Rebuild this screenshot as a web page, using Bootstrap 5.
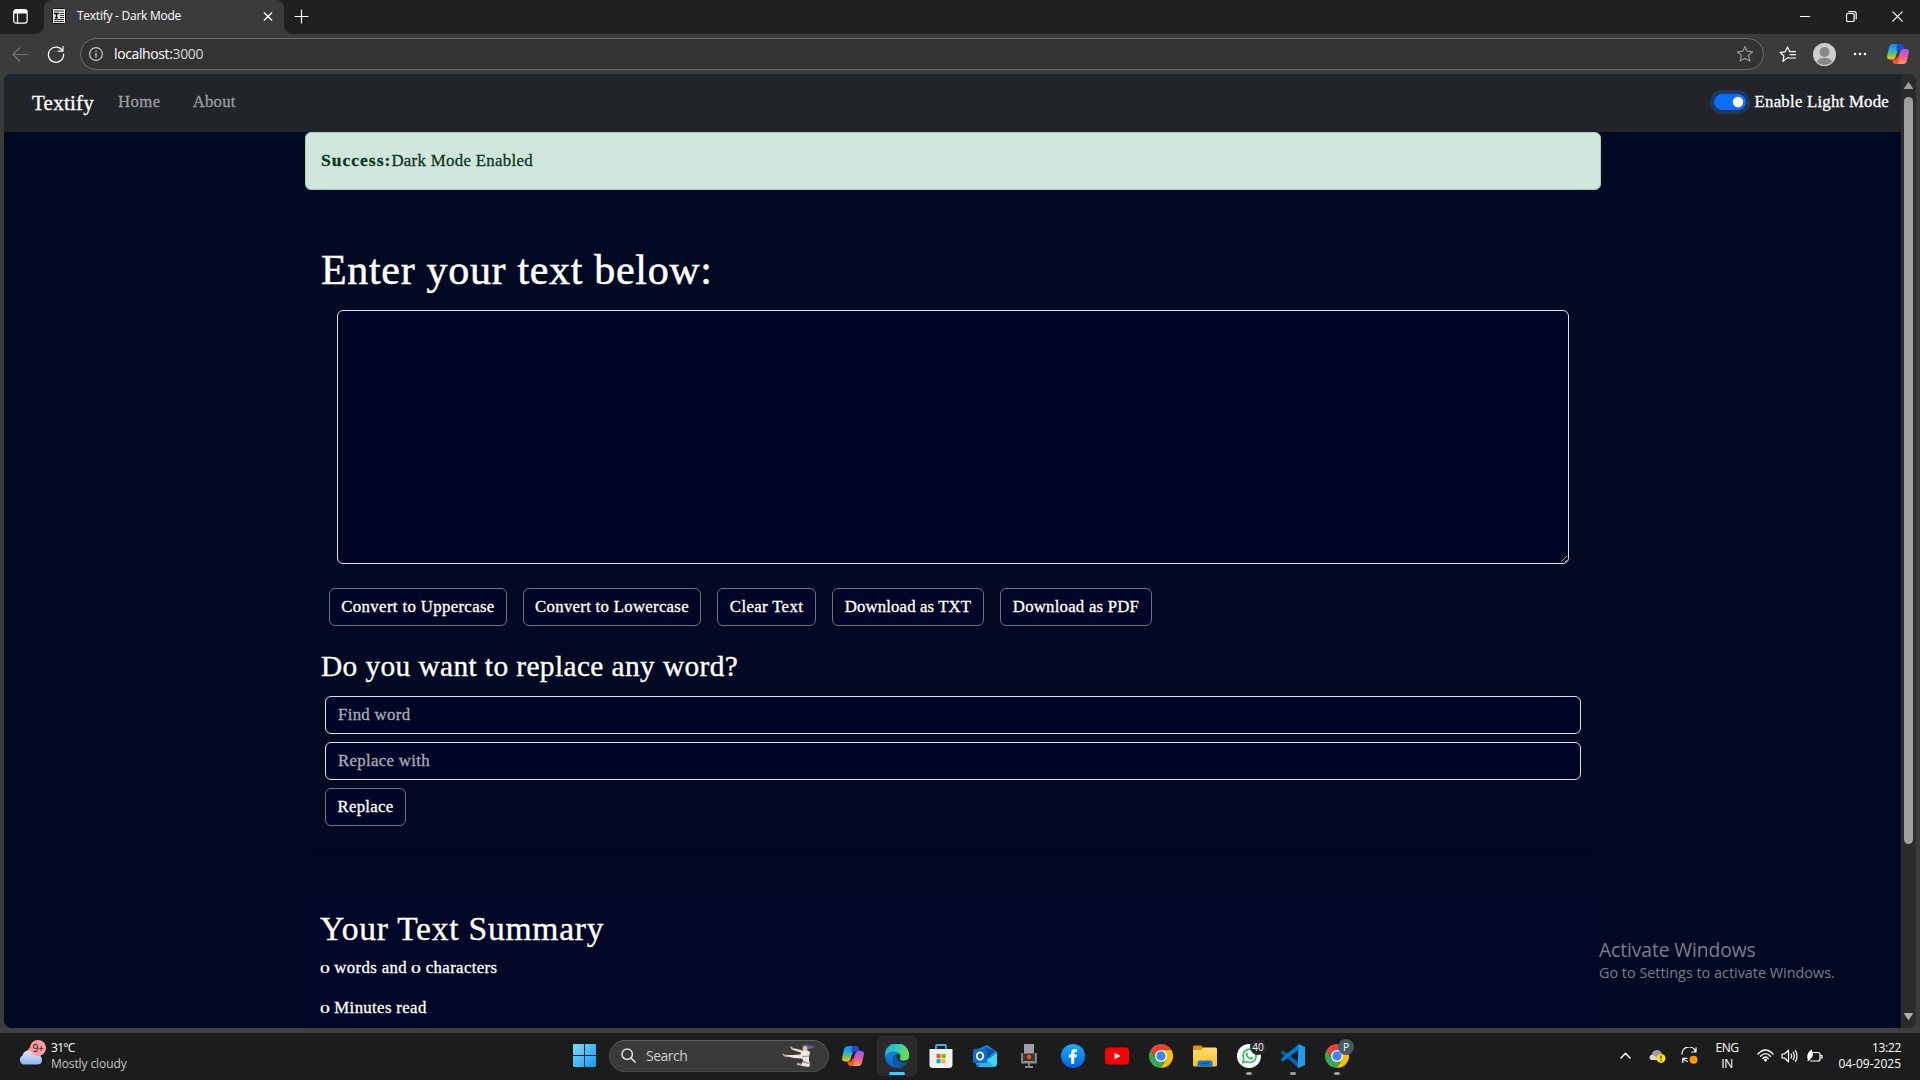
<!DOCTYPE html>
<html lang="en">
<head>
<meta charset="utf-8">
<meta name="viewport" content="width=device-width, initial-scale=1">
<title>Textify - Dark Mode</title>
<link href="https://cdn.jsdelivr.net/npm/bootstrap@5.3.0/dist/css/bootstrap.min.css" rel="stylesheet">
<script src="https://cdn.jsdelivr.net/npm/bootstrap@5.3.0/dist/js/bootstrap.bundle.min.js"></script>
<style>
html,body{height:100%;overflow:hidden}
body{background:#3b3b3b;font-family:"Open Sans","Noto Sans",sans-serif;color:#fff;font-size:12px}
svg{display:block;flex:none}
.ic{fill:none;stroke:#fff;stroke-width:1.2;stroke-linecap:round;stroke-linejoin:round}
.cell{display:flex;align-items:center;justify-content:center;flex:none}

/* browser chrome */
.tabstrip{height:34px;background:#202020}
.tabstrip>.cell{height:32px}
.tab-active{width:240px;height:34px;background:#3b3b3b;border-radius:8px 8px 0 0;position:relative;padding:0 8px 2px}
.tab-active::before,.tab-active::after{content:"";position:absolute;bottom:0;width:8px;height:8px}
.tab-active::before{left:-8px;background:radial-gradient(circle at 0 0,#202020 7.5px,#3b3b3b 8px)}
.tab-active::after{right:-8px;background:radial-gradient(circle at 100% 0,#202020 7.5px,#3b3b3b 8px)}
.tab-title{letter-spacing:-.256px}
.toolbar{height:40px;background:#3b3b3b}
.omnibox{width:1684px;height:32px;border:1px solid #6b6b6b;border-radius:16px;background:#333}
.url{font-size:14px;letter-spacing:-.38px;line-height:30px}
.url span{color:#d5d5d5}

/* page viewport */
.viewport{height:954px;margin:0 4px;border-radius:8px;overflow:hidden;background:#2b2b2b}
.page{width:1897px;background:#010923;font-family:"Liberation Serif",serif;font-size:16.8px;letter-spacing:.32px;line-height:24px;-webkit-text-stroke:.3px;position:relative}
.topnav{height:58px;background:#212529;padding:0 12px 0 28px}
.brand{font-size:21px;letter-spacing:.24px;width:74px;margin-top:-1px}
.navlink{color:#9b9d9e;padding:0 16px;letter-spacing:.4px;line-height:24px;margin-top:-2px}
.navlink.second{letter-spacing:.22px}
.topnav .form-check-input{width:32px;height:16px;margin:-2px 0 0;float:none;background-color:#0d6efd;border-color:#0d6efd;box-shadow:0 0 0 4px rgba(13,110,253,.25)}
.mode-label{letter-spacing:.23px;margin:-2px 0 0 9px}
.wrap{width:1296px;margin-left:301px}
.note{height:58px;padding:16px 15px;border:1px solid #a3cfbb;border-radius:6px;background:#d1e7dd;color:#0a3622;line-height:23px}
.note strong{font-size:17.5px;letter-spacing:1.02px;line-height:23px}
.panel{height:630px;margin-top:28px;padding:28px 16px 0;border-radius:8px;box-shadow:0 4px 8px rgba(0,0,0,.1)}
.panel h1{font-size:42px;letter-spacing:.68px;line-height:48px;margin:0 0 16px;font-weight:400;-webkit-text-stroke:.5px}
.panel h3{font-size:29.4px;letter-spacing:.39px;line-height:34px;margin:23px 0 13px;font-weight:400;-webkit-text-stroke:.35px}
.page .form-control{background:#010627;color:#fff;border:1px solid #dee2e6;font:inherit;letter-spacing:inherit}
.page .form-control::placeholder{color:#a9abb8;opacity:1}
.editor{width:1232px;height:254px;margin:0 16px 24px;display:block}
.page .line{width:1256px;height:38px;margin:0 4px 8px;padding:6px 12px}
.act{height:38px;border:1px solid #6c757d;border-radius:6px;background:#010627;color:#fff;text-align:center;padding:0;font:inherit;letter-spacing:.35px}
.summary{height:134px;margin-top:44px;padding:18px 15px 0;background:#010726}
.summary h2{font-size:33.6px;letter-spacing:.75px;line-height:38px;margin:0 0 8px;font-weight:400;-webkit-text-stroke:.35px}
.summary p{margin:0 0 16px;line-height:24px;letter-spacing:.35px}
.oldnum{display:inline-block;width:9.8px;transform:scale(1.17,.69);transform-origin:0 18px}
.activate{position:absolute;left:1595px;top:864px;color:#7b7e88;font-family:"Open Sans",sans-serif;-webkit-text-stroke:0;white-space:nowrap}
.activate b{display:block;font-weight:400;font-size:19.3px;letter-spacing:-.1px;line-height:24px}
.activate span{display:block;font-size:14.4px;letter-spacing:0;line-height:22px}
.rail{width:15px;height:954px;background:#2b2b2b;padding:8px 0 4px}
.thumb{width:9px;height:747px;border-radius:5px;background:#9f9f9f;margin-top:8px}

/* taskbar */
.chrome-foot{height:5px;background:#3f3f3f}
.taskbar{height:47px;background:#1c1c1c;padding-bottom:2px}
.weather{width:544px;padding-left:17px}
.weather div{line-height:16px}
.badge9{position:absolute;left:13px;top:-6px;width:16px;height:16px;border-radius:50%;background:#ff99a4;color:#111;font-size:10.5px;line-height:16px;text-align:center;letter-spacing:-.4px}
.searchbox{width:220px;height:32px;border:1px solid #4b4b4b;border-top-color:#606060;border-radius:16px;background:#3a3a3a;margin:0 2px 0 3px;padding:0 12px 0 11px}
.searchbox span{font-size:14px;letter-spacing:-.5px;color:#cfcfcf;margin-left:10px}
.app{width:44px;height:45px;position:relative}
.app.current::before{content:"";position:absolute;inset:3px 2px 2px;border-radius:5px;background:#2a2a2a;border:1px solid #303030}
.app svg{position:relative}
.app.open::after,.app.current::after{content:"";position:absolute;left:19px;bottom:3px;width:6px;height:3px;border-radius:2px;background:#9a9a9a}
.app.current::after{left:14px;width:16px;background:#4cc2ff}
.count{position:absolute;left:23px;top:6px;width:16px;height:16px;border-radius:50%;background:#26262d;font-size:10px;line-height:16px;text-align:center}
.count.prof{background:#455a64}
.tray-text{line-height:16px}
</style>
</head>
<body>
<svg width="0" height="0" class="position-absolute">
<defs>
<linearGradient id="cpA" x1="0" y1="0" x2="0" y2="1"><stop offset="0" stop-color="#1787e8"/><stop offset=".45" stop-color="#22b5d8"/><stop offset=".7" stop-color="#7dc04c"/><stop offset="1" stop-color="#f6c416"/></linearGradient>
<linearGradient id="cpB" x1="0" y1="0" x2="0" y2="1"><stop offset="0" stop-color="#a356f0"/><stop offset=".5" stop-color="#e45aa6"/><stop offset="1" stop-color="#ff9a4d"/></linearGradient>
<linearGradient id="win" x1="0" y1="0" x2="1" y2="1"><stop offset="0" stop-color="#84dcfb"/><stop offset="1" stop-color="#0a9af5"/></linearGradient>
<linearGradient id="edA" x1="0" y1="0" x2="1" y2=".4"><stop offset="0" stop-color="#1ba7e8"/><stop offset=".5" stop-color="#2fc8c0"/><stop offset="1" stop-color="#66e04c"/></linearGradient>
<linearGradient id="edB" x1="0" y1="0" x2="0" y2="1"><stop offset="0" stop-color="#1b9de2"/><stop offset="1" stop-color="#0c59c4"/></linearGradient>
<linearGradient id="cl" x1="0" y1="0" x2="0" y2="1"><stop offset="0" stop-color="#dfebff"/><stop offset="1" stop-color="#8fb4ee"/></linearGradient>
<linearGradient id="fo" x1="0" y1="0" x2="0" y2="1"><stop offset="0" stop-color="#ffdc70"/><stop offset="1" stop-color="#fbc02d"/></linearGradient>
<linearGradient id="fbg" x1="0" y1="0" x2="0" y2="1"><stop offset="0" stop-color="#18acfe"/><stop offset="1" stop-color="#0163e0"/></linearGradient>
<symbol id="copilot" viewBox="0 0 22 20">
<path d="M5.5 0H12.5L8.6 13Q7.8 15.6 5.6 15.6H2.6Q-.7 15.2.2 11.5L2 3.5Q3 0 5.5 0Z" fill="url(#cpA)"/>
<path d="M10 0H14.5Q16.2 0 16.8 2L17.6 5H14.6Q12.4 5 11.6 7L10.6 8.5 9.4 6Z" fill="#1a4fd0"/>
<path d="M16.5 20H9.5L13.2 7.5Q14 5 16.2 5H19.4Q22.6 5.2 21.8 9L20 16.5Q19 20 16.5 20Z" fill="url(#cpB)"/>
<path d="M5.2 15.6H7.6Q9.6 15.4 10.4 12.8L11.2 12 12.4 14 10.8 20H8Q6.4 20 5.8 18Z" fill="#f4512c"/>
</symbol>
<symbol id="chrome" viewBox="0 0 24 24">
<path d="M1.6 6A12 12 0 0 0 12 24L17.2 15H6.8Z" fill="#34a853"/>
<path d="M12 6H22.4A12 12 0 0 1 12 24L17.2 15Z" fill="#fbbc05"/>
<path d="M1.6 6A12 12 0 0 1 22.4 6H12L6.8 15Z" fill="#ea4335"/>
<circle cx="12" cy="12" r="6" fill="#fff"/><circle cx="12" cy="12" r="4.7" fill="#4285f4"/>
</symbol>
</defs></svg>

<header>
<div class="tabstrip d-flex">
<div class="cell" style="width:44px;padding-right:4px"><svg width="15" height="15" viewBox="0 0 15 15"><rect x=".7" y=".7" width="13.4" height="13.4" rx="2.4" class="ic"/><path d="M.7 4.5V3Q.7.7 3 .7H12Q14.2.7 14.2 3V4.5Z" fill="#fff"/><path d="M4.5 4V14" class="ic"/></svg></div>
<div class="tab-active d-flex align-items-center">
<svg width="14" height="16" viewBox="0 0 14 16"><rect x=".5" y=".5" width="13" height="15" rx="1" fill="#e8e8e8" stroke="#111"/><path d="M2 3H12M8 5.5H12M8 7.5H12M8 9.5H12M2 11.5H12M2 13.5H12" stroke="#333"/><path d="M2 5.5H7M4.5 5.5V10M3 9.8H6" stroke="#111" stroke-width="1.4"/></svg>
<span class="tab-title flex-grow-1" style="margin-left:11px">Textify - Dark Mode</span>
<svg width="16" height="16" viewBox="0 0 16 16"><path d="M4.2 4.8 11.8 12.2M11.8 4.8 4.2 12.2" class="ic"/></svg>
</div>
<div class="cell" style="width:34px"><svg width="15" height="15" viewBox="0 0 15 15"><path d="M7.5 1V14M1 7.5H14" class="ic"/></svg></div>
<div class="cell ms-auto" style="width:46px"><svg width="10" height="10"><path d="M0 5.5H10" stroke="#fff"/></svg></div>
<div class="cell" style="width:46px"><svg width="11" height="11" viewBox="0 0 11 11" class="ic"><rect x=".5" y="2.5" width="7.6" height="8" rx="1.2"/><path d="M2.8.6H8.2Q10.2.6 10.2 2.6V8"/></svg></div>
<div class="cell" style="width:46px"><svg width="11" height="11"><path d="M.8.8 10.2 10.2M10.2.8.8 10.2" class="ic"/></svg></div>
</div>
<div class="toolbar d-flex align-items-center">
<div class="cell" style="width:40px"><svg width="17" height="15" viewBox="0 0 17 15"><path d="M16 7.5H1M7.5 1 1 7.5 7.5 14" class="ic" style="stroke:#747474"/></svg></div>
<div class="cell" style="width:32px;margin-right:8px"><svg width="18" height="18" viewBox="0 0 18 18"><path d="M15.8 6.2A7.6 7.6 0 1 0 16.6 9M16 1.5V6.2H11.2" class="ic"/></svg></div>
<div class="omnibox d-flex align-items-center">
<svg width="14" height="14" viewBox="0 0 14 14" style="margin:0 11px 0 8px"><circle cx="7" cy="7" r="6.4" fill="none" stroke="#cfcfcf" stroke-width="1.1"/><path d="M7 6V10.2M7 3.6V4.8" stroke="#cfcfcf" stroke-width="1.3"/></svg>
<div class="url flex-grow-1">localhost:<span>3000</span></div>
<svg width="18" height="18" viewBox="0 0 18 18" style="margin-right:9px"><path d="M9 1.4 11.2 6.2 16.6 6.8 12.6 10.4 13.8 15.9 9 13.2 4.2 15.9 5.4 10.4 1.4 6.8 6.8 6.2Z" class="ic" style="stroke:#999"/></svg>
</div>
<div class="cell" style="width:48px"><svg width="18" height="17" viewBox="0 0 18 17"><path d="M9.4 11.5 8.5 11.9 4 15.4 4.9 10 1 6.4 6.2 5.8 8.5 1 10.6 5.6H16.5M11 8.7H16.5M9.4 12H16.5" class="ic"/></svg></div>
<div class="cell" style="width:24px"><svg width="23" height="23" viewBox="0 0 23 23"><circle cx="11.5" cy="11.5" r="11.5" fill="#d0cecc"/><circle cx="11.5" cy="9" r="5" fill="#8a8784"/><path d="M3.8 19Q6 14.8 11.5 14.8T19.2 19A11.5 11.5 0 0 1 3.8 19Z" fill="#8a8784"/></svg></div>
<div class="cell" style="width:48px"><svg width="14" height="4"><g fill="#fff"><circle cx="2" cy="2" r="1.3"/><circle cx="7" cy="2" r="1.3"/><circle cx="12" cy="2" r="1.3"/></g></svg></div>
<div class="cell" style="width:28px"><svg width="22" height="20"><use href="#copilot"/></svg></div>
</div>
</header>

<div class="viewport d-flex">
<div class="page">
<nav class="topnav d-flex align-items-center">
<span class="brand">Textify</span>
<span class="navlink" style="padding-left:12px">Home</span><span class="navlink second">About</span>
<input class="form-check-input ms-auto" type="checkbox" checked id="mode" style="border-radius:16px;background-image:url(&quot;data:image/svg+xml,%3csvg xmlns='http://www.w3.org/2000/svg' viewBox='-4 -4 8 8'%3e%3ccircle r='3' fill='%23fff'/%3e%3c/svg%3e&quot;);background-position:right center">
<label class="mode-label" for="mode">Enable Light Mode</label>
</nav>
<div class="wrap">
<div class="note"><strong>Success:</strong>Dark Mode Enabled</div>
<section class="panel">
<h1>Enter your text below:</h1>
<textarea class="form-control editor"></textarea>
<div class="d-flex gap-3 ms-2">
<button class="act" style="width:178px">Convert to Uppercase</button><button class="act" style="width:178px;letter-spacing:.28px">Convert to Lowercase</button><button class="act" style="width:99px">Clear Text</button><button class="act" style="width:152px;letter-spacing:.12px">Download as TXT</button><button class="act" style="width:152px;letter-spacing:.22px">Download as PDF</button>
</div>
<h3>Do you want to replace any word?</h3>
<input class="form-control line" placeholder="Find word">
<input class="form-control line" placeholder="Replace with">
<button class="act ms-1" style="width:81px;letter-spacing:.28px">Replace</button>
</section>
<section class="summary">
<h2>Your Text Summary</h2>
<p><span class="oldnum">0</span> words and <span class="oldnum">0</span> characters</p>
<p><span class="oldnum">0</span> Minutes read</p>
</section>
</div>
<div class="activate"><b>Activate Windows</b><span>Go to Settings to activate Windows.</span></div>
</div>
<div class="rail d-flex flex-column align-items-center">
<svg width="9" height="7"><path d="M4.5 0Q5 0 9 6.5Q9 7 8.5 7H.5Q0 7 0 6.5Q4 0 4.5 0Z" fill="#9f9f9f"/></svg>
<div class="thumb"></div>
<svg width="9" height="7" class="mt-auto" style="margin-bottom:4px"><path d="M4.5 7Q5 7 9 .5Q9 0 8.5 0H.5Q0 0 0 .5Q4 7 4.5 7Z" fill="#b0b0b0"/></svg>
</div>
</div>
<div class="chrome-foot"></div>

<footer class="taskbar d-flex align-items-center">
<div class="weather d-flex align-items-center">
<div class="position-relative" style="margin-right:8px"><svg width="26" height="20" viewBox="0 0 26 20"><circle cx="17" cy="7" r="7" fill="#f6851f"/><path d="M7 18A5 5 0 0 1 6.5 9Q8 3.5 13.5 4Q18 4.5 19.5 8.5Q26 8 26 13.5Q26 18 21 18Z" fill="url(#cl)" transform="translate(-1 .5)"/></svg><span class="badge9">9+</span></div>
<div><div style="letter-spacing:-.7px">31°C</div><div style="color:#c4c4c4;letter-spacing:-.1px">Mostly cloudy</div></div>
</div>
<div class="d-flex align-items-center" style="margin-left:18px">
<div class="app cell"><svg width="23" height="23" viewBox="0 0 23 23"><path d="M0 1Q0 0 1 0H11V11H0ZM12 0H22Q23 0 23 1V11H12ZM0 12H11V23H1Q0 23 0 22ZM12 12H23V22Q23 23 22 23H12Z" fill="url(#win)"/></svg></div>
<div class="searchbox d-flex align-items-center">
<svg width="15" height="15" viewBox="0 0 15 15"><circle cx="6.2" cy="6.2" r="5.2" fill="none" stroke="#ddd" stroke-width="1.5"/><path d="M10 10 14 14" stroke="#ddd" stroke-width="1.7" stroke-linecap="round"/></svg>
<span class="flex-grow-1">Search</span>
<svg width="34" height="24" viewBox="0 0 34 24"><path d="M20 2Q24-.5 28 1.5Q31 2 33 1.5Q31 4 28 5L23 5Z" fill="#5e5aa5"/><circle cx="23" cy="4.4" r="2.4" fill="#e9bfa2"/><path d="M20.5 6.5Q25 5 28 8L27 13 27 17 28 20 22 18 20 14.5 12 14 5 12.5 3 11 11 11 18.5 10.5 19 8.5 11 6 10 4.5 13 4.5Z" fill="#eee6e0"/><path d="M0 9.5Q1 9 2 10.5L6 11 5.5 13 2 12.5ZM8 3Q9 2 10.5 3.5L12 5.5 10 6ZM15 19 21 20 21 22 15 21Z" fill="#dfb094"/><path d="M20 18 28 20 27 23 20 22Z" fill="#eee6e0"/><path d="M20.5 12.5 27 12M21 17.5 26 19" stroke="#8f8791"/></svg>
</div>
<div class="app cell"><svg width="22" height="20"><use href="#copilot"/></svg></div>
<div class="app cell current"><svg width="24" height="24" viewBox="0 0 24 24"><circle cx="12" cy="12" r="12" fill="url(#edB)"/><path d="M0 11A12 12 0 0 1 24 11Q24.5 16 19 17Q15 17.3 14.3 15.2Q16.5 13.2 15.2 10.6Q13.5 7.5 8.5 7.4Q2.5 7.5 0 12Z" fill="url(#edA)"/><path d="M8.4 12Q10.2 9.5 13.5 9.8Q10.5 12.5 13.2 16.2Q16.5 19.5 22 17.5Q18.8 23.6 12.5 24Q5.8 20 8.4 12Z" fill="#0c59a4"/><path d="M13.5 9.6Q16.4 11.5 14.4 14.8L15.2 16Q19 17.8 23.2 15.5L22 18Q17 20 13 16.3Q10.2 12.5 13.5 9.6Z" fill="#2a2a2a"/></svg></div>
<div class="app cell"><svg width="24" height="24" viewBox="0 0 24 24"><path d="M7 6V2Q7 1 8 1H16Q17 1 17 2V6" fill="none" stroke="#35b5f2" stroke-width="1.8"/><path d="M.5 5H23.5V20.5Q23.5 24 20 24H4Q.5 24 .5 20.5Z" fill="#f2f2f2"/><path d="M7.5 10H11.6V14.1H7.5Z" fill="#f25022"/><path d="M12.6 10H16.7V14.1H12.6Z" fill="#7fba00"/><path d="M7.5 15.1H11.6V19.2H7.5Z" fill="#00a4ef"/><path d="M12.6 15.1H16.7V19.2H12.6Z" fill="#ffb900"/></svg></div>
<div class="app cell"><svg width="24" height="22" viewBox="0 0 24 22"><path d="M5 4 14 0 24 7V18Q24 22 20 22H6Q3 22 3 19Z" fill="#1488dc"/><path d="M12 2 22 6 15 13 9 9Z" fill="#0a4fa6"/><path d="M24 8V18Q24 22 20 22H6L14 15Z" fill="#43d5f5"/><path d="M9 22 4 18 14 15 22 22Z" fill="#2ab4ec"/><rect y="4" width="14" height="14" rx="1.5" fill="#0f6cc9"/><ellipse cx="7" cy="11" rx="3.2" ry="3.7" fill="none" stroke="#fff" stroke-width="1.8"/></svg></div>
<div class="app cell"><svg width="16" height="24" viewBox="0 0 16 24"><path d="M3 0H13V18H3Z" fill="#9aa0a6"/><path d="M1.2 9V18.5H14.8V9" fill="none" stroke="#858b90" stroke-width="2.2"/><path d="M3 9.5H13V17H3Z" fill="#34383c"/><path d="M8 19V23M4 23H12" stroke="#858b90" stroke-width="1.8"/><circle cx="8" cy="13" r="2.3" fill="#f4511e"/></svg></div>
<div class="app cell"><svg width="24" height="24" viewBox="0 0 24 24"><circle cx="12" cy="12" r="12" fill="url(#fbg)"/><path d="M10.2 20V13.5H7.8V10.4H10.2V8.7Q10.2 5 13.8 5Q15 5 16 5.2V8H14.6Q13.2 8 13.2 9.4V10.4H15.9L15.4 13.5H13.2V20Z" fill="#fff"/></svg></div>
<div class="app cell"><svg width="24" height="18" viewBox="0 0 24 18"><rect y=".5" width="24" height="17" rx="3.5" fill="#f00"/><path d="M9.6 5.7 15.6 9 9.6 12.3Z" fill="#fff"/></svg></div>
<div class="app cell"><svg width="24" height="24"><use href="#chrome"/></svg></div>
<div class="app cell"><svg width="24" height="22" viewBox="0 0 24 22"><path d="M0 2Q0 .5 1.5.5H8L10.5 3V8H0Z" fill="#d99a0b"/><path d="M0 5H8L10.5 2.5H22.5Q24 2.5 24 4V20Q24 21.5 22.5 21.5H1.5Q0 21.5 0 20Z" fill="url(#fo)"/><path d="M4.5 21.5V18Q4.5 15.5 7 15.5H17Q19.5 15.5 19.5 18V21.5Z" fill="#1976c8"/><path d="M8 18.5H16" stroke="#0e4f96" stroke-width="1.4"/></svg></div>
<div class="app cell open"><svg width="24" height="24" viewBox="0 0 24 24"><circle cx="12" cy="12" r="12" fill="#fff"/><path d="M5.8 18.5 6.8 15.2A6.6 6.6 0 1 1 9.2 17.6Z" fill="none" stroke="#25c15c" stroke-width="1.6"/><path d="M9.5 8.5Q10.5 8 11 10L10.5 11Q11.5 13 13.5 13.7L14.5 12.8Q16.5 13.5 16 14.5Q14.5 16.5 11.8 14.8Q8.2 12.2 8.6 9.8Z" fill="#25c15c"/></svg><span class="count">40</span></div>
<div class="app cell open"><svg width="24" height="24" viewBox="0 0 24 24"><path d="M0 8 2 6.5 18 18.5V24L.3 9.5Z" fill="#0065a9"/><path d="M0 16 2 17.5 18 5.5V0L.3 14.5Z" fill="#007acc"/><path d="M17.5 0 24 3V21L17.5 24 16.5 23Z" fill="#1f9cf0"/></svg></div>
<div class="app cell open"><svg width="24" height="24"><use href="#chrome"/></svg><span class="count prof">P</span></div>
</div>
<div class="d-flex align-items-center ms-auto" style="padding-right:19px">
<div class="cell" style="width:32px"><svg width="11" height="7"><path d="M1 6 5.5 1.2 10 6" class="ic" style="stroke-width:1.5"/></svg></div>
<div class="cell" style="width:32px"><svg width="17" height="14" viewBox="0 0 17 14"><path d="M3 11A3 3 0 0 1 2.5 5.5Q4 1 8 1Q12 1 13 5L14 11Z" fill="#9b9b9b"/><path d="M2 11Q-.5 9 1 7Q3 5 6 7L9 11Z" fill="#d8d8d8"/><circle cx="12" cy="9.4" r="4.5" fill="#ffe600"/><path d="M12 6.5V10M12 11V12.2" stroke="#222" stroke-width="1.2"/></svg></div>
<div class="cell" style="width:32px"><svg width="17" height="17" viewBox="0 0 17 17"><path d="M1 7A7 7 0 0 1 14.6 4.6M15 .8V5H10.8M6.5 14.5Q3.5 13.6 2 11.5M6 11.4H1.8V15.5" class="ic"/><circle cx="12.5" cy="12.8" r="4" fill="#ff9800"/></svg></div>
<div class="tray-text text-center" style="width:44px;letter-spacing:-.45px">ENG<br>IN</div>
<div class="cell" style="width:32px"><svg width="17" height="13" viewBox="0 0 17 13"><path d="M1 5Q8.5-3 16 5M3.5 7.2Q8.5 2 13.5 7.2M5.8 9.4Q8.5 6.6 11.2 9.4" class="ic" style="stroke-width:1.4"/><circle cx="8.5" cy="11" r="1.5" fill="#fff"/></svg></div>
<div class="cell" style="width:17px"><svg width="17" height="14" viewBox="0 0 17 14"><path d="M1 5V9H3.5L7.5 12.8V1.2L3.5 5ZM10 5Q11.2 7 10 9M12.2 3.2Q14.4 7 12.2 10.8M14.4 1.5Q17.6 7 14.4 12.5" class="ic"/></svg></div>
<div class="cell" style="width:33px"><svg width="17" height="14" viewBox="0 0 17 14"><path d="M7.5 3.5H12Q14 3.5 14 5.5V10Q14 12 12 12H4.5M14.8 6.5H16V9H14.8" class="ic"/><path d="M1 12 2 11Q-.5 5 5.5.5Q9 7 4 10.5L2.5 12Z" fill="#fff"/></svg></div>
<div class="tray-text text-end" style="width:70px"><span style="letter-spacing:-.32px">13:22</span><br>04-09-2025</div>
</div>
</footer>
</body>
</html>
